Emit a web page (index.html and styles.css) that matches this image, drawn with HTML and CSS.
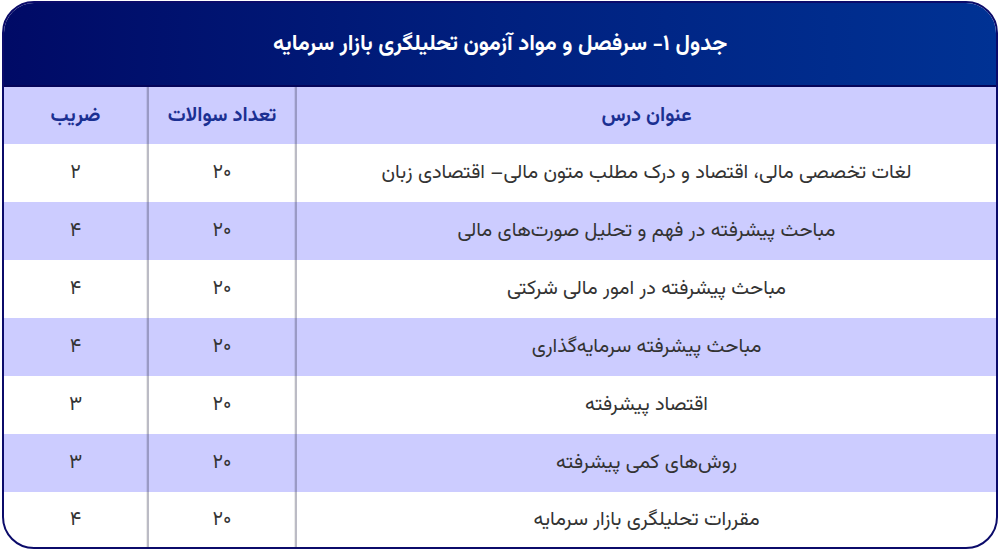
FILE: index.html
```html
<!DOCTYPE html>
<html lang="fa" dir="rtl">
<head>
<meta charset="utf-8">
<title>جدول ۱</title>
<link rel="stylesheet" href="styles.css">
</head>
<body>
<div class="card">
  <div class="title">جدول ۱- سرفصل و مواد آزمون تحلیلگری بازار سرمایه</div>
  <div class="grid">
    <div class="row head"><div class="c">عنوان درس</div><div class="c sep">تعداد سوالات</div><div class="c sep">ضریب</div></div>
    <div class="row"><div class="c">لغات تخصصی مالی، اقتصاد و درک مطلب متون مالی– اقتصادی زبان</div><div class="c sep">۲۰</div><div class="c sep">۲</div></div>
    <div class="row alt"><div class="c">مباحث پیشرفته در فهم و تحلیل صورت‌های مالی</div><div class="c sep">۲۰</div><div class="c sep">۴</div></div>
    <div class="row"><div class="c">مباحث پیشرفته در امور مالی شرکتی</div><div class="c sep">۲۰</div><div class="c sep">۴</div></div>
    <div class="row alt"><div class="c">مباحث پیشرفته سرمایه‌گذاری</div><div class="c sep">۲۰</div><div class="c sep">۴</div></div>
    <div class="row"><div class="c">اقتصاد پیشرفته</div><div class="c sep">۲۰</div><div class="c sep">۳</div></div>
    <div class="row alt"><div class="c">روش‌های کمی پیشرفته</div><div class="c sep">۲۰</div><div class="c sep">۳</div></div>
    <div class="row last"><div class="c">مقررات تحلیلگری بازار سرمایه</div><div class="c sep">۲۰</div><div class="c sep">۴</div></div>
  </div>
</div>
</body>
</html>
```
FILE: styles.css
```css
html, body {
  margin: 0;
  padding: 0;
  background: #ffffff;
}
body {
  font-family: "Vazirmatn", "Noto Sans Arabic", "DejaVu Sans", sans-serif;
  direction: rtl;
}
.card {
  box-sizing: border-box;
  width: 996px;
  height: 548px;
  margin: 1px 2px 0 2px;
  border: 2px solid #0b0b6a;
  border-radius: 32px;
  overflow: hidden;
  display: flex;
  flex-direction: column;
  background: #ffffff;
}
.title {
  height: 84px;
  flex: none;
  border-bottom: 2px solid #05055a;
  background: linear-gradient(to left, #003294 0%, #00207f 50%, #000a66 100%);
  color: #ffffff;
  font-weight: bold;
  font-size: 22px;
  display: flex;
  align-items: center;
  justify-content: center;
  box-sizing: border-box;
}
.grid {
  flex: 1;
  display: flex;
  flex-direction: column;
}
.row {
  display: grid;
  grid-template-columns: 1fr 148px 145px;
  height: 58px;
  flex: none;
  color: #333333;
  font-size: 20px;
}
.row.head {
  height: 57px;
  background: #ccccff;
  color: #1b3092;
  font-weight: bold;
}
.row.alt {
  background: #ccccff;
}
.row.last {
  flex: 1;
  height: auto;
}
.c {
  display: flex;
  align-items: center;
  justify-content: center;
}
.sep {
  border-right: 2px solid rgba(60, 60, 90, 0.35);
  box-shadow: inset -1px 0 0 rgba(0, 0, 0, 0.08);
}
```
